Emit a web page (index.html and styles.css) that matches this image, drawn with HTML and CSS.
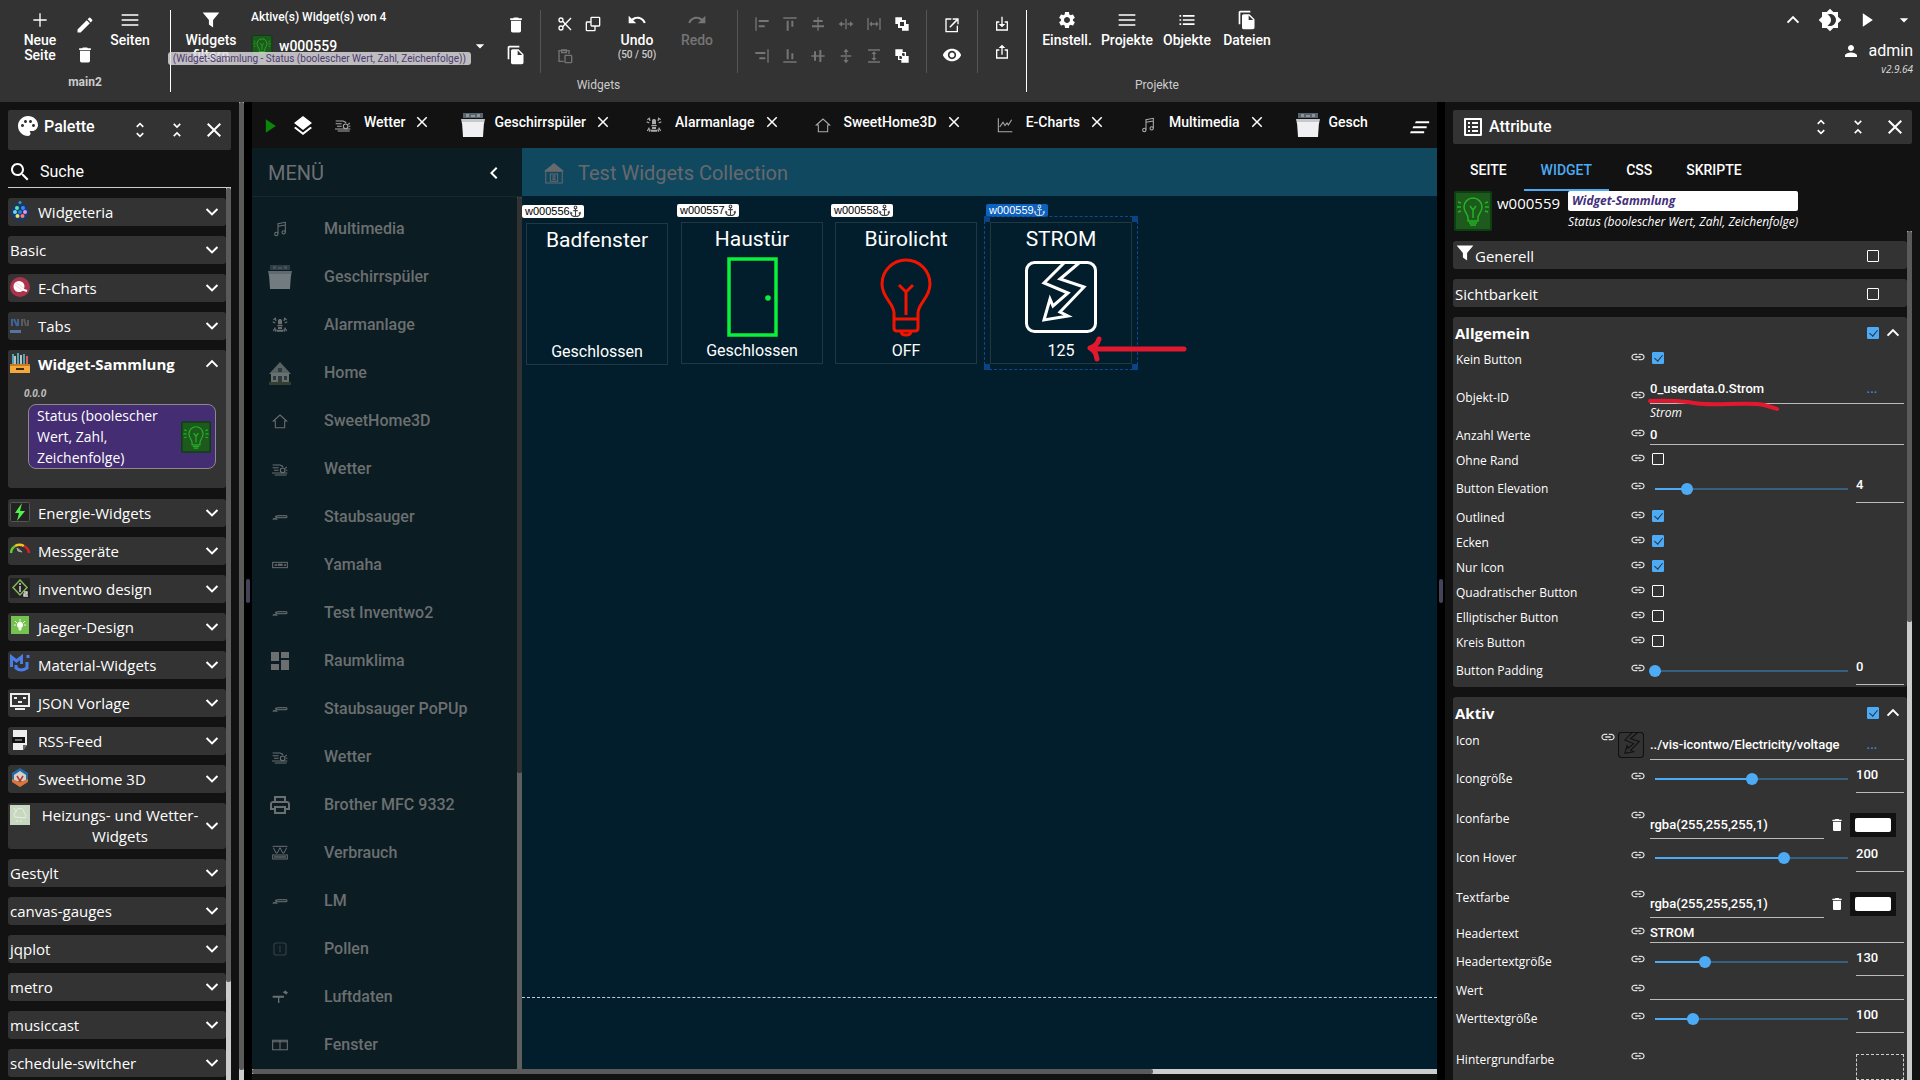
FILE: index.html
```html
<!DOCTYPE html>
<html lang="de">
<head>
<meta charset="utf-8">
<title>main2</title>
<link rel="stylesheet" href="styles.css">
</head>
<body>
<svg class="sprite" aria-hidden="true">
  <symbol id="add" viewBox="0 0 24 24"><path d="M20 12.800h-7.200V20h-1.600v-7.200H4v-1.600h7.200V4h1.600v7.200H20z"/></symbol>
  <symbol id="edit" viewBox="0 0 24 24"><path d="M3 17.250V21h3.750L17.810 9.940l-3.750-3.750L3 17.250zM20.710 7.040c.39-.39.39-1.020 0-1.410l-2.340-2.340a1 1 0 0 0-1.410 0l-1.830 1.830 3.750 3.750 1.830-1.830z"/></symbol>
  <symbol id="trash" viewBox="0 0 24 24"><path d="M6 19c0 1.100.9 2 2 2h8c1.100 0 2-.9 2-2V7H6v12zM19 4h-3.500l-1-1h-5l-1 1H5v2h14V4z"/></symbol>
  <symbol id="lines" viewBox="0 0 24 24"><path d="M2 19h20v-2H2zM2 13h20v-2H2zM2 7h20V5H2z"/></symbol>
  <symbol id="filter" viewBox="0 0 24 24"><path d="M2 3h20l-7.500 9v9l-5-3.500V12z"/></symbol>
  <symbol id="close" viewBox="0 0 24 24"><path d="M19 6.410L17.590 5 12 10.590 6.410 5 5 6.410 10.590 12 5 17.590 6.410 19 12 13.410 17.590 19 19 17.590 13.410 12z"/></symbol>
  <symbol id="unfold" viewBox="0 0 24 24"><path d="M12 5.830 15.170 9l1.410-1.410L12 3 7.410 7.590 8.830 9 12 5.830zm0 12.340L8.830 15l-1.410 1.410L12 21l4.590-4.590L15.170 15 12 18.170z"/></symbol>
  <symbol id="fold" viewBox="0 0 24 24"><path d="M7.410 18.590 8.830 20 12 16.830 15.170 20l1.410-1.410L12 14l-4.590 4.590zm9.180-13.180L15.170 4 12 7.170 8.830 4 7.410 5.410 12 10l4.590-4.590z"/></symbol>
  <symbol id="down" viewBox="0 0 24 24"><path d="M17.700 7.500 12 13.170 6.300 7.500 4.600 9.200l7.400 7.400 7.400-7.400z"/></symbol>
  <symbol id="up" viewBox="0 0 24 24"><path d="M17.700 16 12 10.330 6.300 16l-1.700-1.700L12 6.900l7.400 7.400z"/></symbol>
  <symbol id="left" viewBox="0 0 24 24"><path d="M15.410 7.410 14 6l-6 6 6 6 1.410-1.410L10.830 12z"/></symbol>
  <symbol id="undo" viewBox="0 0 24 24"><path d="M12.500 8c-2.650 0-5.050.99-6.900 2.600L2 7v9h9l-3.620-3.620c1.390-1.160 3.160-1.880 5.120-1.880 3.540 0 6.550 2.310 7.600 5.500l2.370-.78C21.080 11.030 17.150 8 12.500 8z"/></symbol>
  <symbol id="redo" viewBox="0 0 24 24"><path d="M18.400 10.600C16.550 8.990 14.150 8 11.500 8c-4.650 0-8.580 3.030-9.960 7.220L3.900 16c1.050-3.190 4.050-5.500 7.600-5.500 1.950 0 3.730.72 5.120 1.880L13 16h9V7l-3.600 3.600z"/></symbol>
  <symbol id="files" viewBox="0 0 24 24"><path d="M16 1H4c-1.100 0-2 .9-2 2v14h2V3h12V1zm-1 4 6 6v10c0 1.100-.9 2-2 2H8c-1.100 0-2-.9-2-2V7c0-1.100.9-2 2-2h7zm-1 7h5.500L14 6.500V12z"/></symbol>
  <symbol id="cut" viewBox="0 0 24 24"><g fill="none" stroke="currentColor" stroke-width="2"><circle cx="6" cy="6" r="3"/><circle cx="6" cy="18" r="3"/><path d="M8.500 8 21 21M8.500 16 21 3"/></g></symbol>
  <symbol id="copy" viewBox="0 0 24 24"><g fill="none" stroke="currentColor" stroke-width="2"><rect x="9" y="2" width="13" height="13" rx="1"/><path d="M9 9H3a1 1 0 0 0-1 1v11a1 1 0 0 0 1 1h11a1 1 0 0 0 1-1v-6"/></g></symbol>
  <symbol id="paste" viewBox="0 0 24 24"><g fill="none" stroke="currentColor" stroke-width="2"><path d="M10 20H3V4h15v5M7 3h7v4H7z"/><rect x="12" y="11" width="10" height="11" rx="1"/></g></symbol>
  <symbol id="al" viewBox="0 0 24 24"><path d="M2 2h2v20H2zM7 6h15v3H7zM7 14h9v3H7z"/></symbol>
  <symbol id="ar" viewBox="0 0 24 24"><path d="M20 2h2v20h-2zM2 6h15v3H2zM8 14h9v3H8z"/></symbol>
  <symbol id="at" viewBox="0 0 24 24"><path d="M2 2h20v2H2zM7 7h3v15H7zM14 7h3v9h-3z"/></symbol>
  <symbol id="ab" viewBox="0 0 24 24"><path d="M2 20h20v2H2zM7 2h3v15H7zM14 8h3v9h-3z"/></symbol>
  <symbol id="ac" viewBox="0 0 24 24"><path d="M11 2h2v4h6v3h-6v5h8v3h-8v5h-2v-5H3v-3h8V9H5V6h6z"/></symbol>
  <symbol id="am" viewBox="0 0 24 24"><path d="M2 11h4V5h3v6h5V3h3v8h5v2h-5v8h-3v-8H9v6H6v-6H2z"/></symbol>
  <symbol id="wh" viewBox="0 0 24 24"><path d="M11 4h2v16h-2zM1 12l5-4v3h4v2H6v3zM23 12l-5-4v3h-4v2h4v3z"/></symbol>
  <symbol id="wv" viewBox="0 0 24 24"><path d="M4 11h16v2H4zM12 1l4 5h-3v4h-2V6H8zM12 23l4-5h-3v-4h-2v4H8z"/></symbol>
  <symbol id="sh" viewBox="0 0 24 24"><path d="M2 3h2v18H2zM20 3h2v18h-2zM5 12l4-4v3h6V8l4 4-4 4v-3H9v3z"/></symbol>
  <symbol id="sv" viewBox="0 0 24 24"><path d="M3 2h18v2H3zM3 20h18v2H3zM12 5l4 4h-3v6h3l-4 4-4-4h3V9H8z"/></symbol>
  <symbol id="front" viewBox="0 0 24 24"><path d="M2 2h10v10H2zM12 12h10v10H12z"/><path d="M7.500 7.500h9v9h-9z" fill="#333" stroke="currentColor" stroke-width="3"/></symbol>
  <symbol id="back" viewBox="0 0 24 24"><path d="M7 7h10v10H7z" fill="#333" stroke="currentColor" stroke-width="2"/><path d="M2 2h11v10H2zM11 12h11v10H11z"/><path d="M12 8h3v3h-3zM9 13h3v3H9z" fill="#333"/></symbol>
  <symbol id="open" viewBox="0 0 24 24"><path d="M19 21H4V4h7V2H3a1 1 0 0 0-1 1v19a1 1 0 0 0 1 1h17a1 1 0 0 0 1-1v-9h-2zM13 2v2h5L8 14.500 9.500 16 20 5.500V11h2V2z"/></symbol>
  <symbol id="eye" viewBox="0 0 24 24"><path d="M12 4.500C7 4.500 2.730 7.610 1 12c1.730 4.390 6 7.500 11 7.500s9.270-3.110 11-7.500c-1.730-4.390-6-7.500-11-7.500zM12 17c-2.760 0-5-2.240-5-5s2.240-5 5-5 5 2.240 5 5-2.240 5-5 5zm0-8c-1.660 0-3 1.340-3 3s1.340 3 3 3 3-1.340 3-3-1.340-3-3-3z"/></symbol>
  <symbol id="import" viewBox="0 0 24 24"><path d="M8 8H3v14h18V8h-5v2h3v10H5V10h3zM11 1h2v11h4l-5 5-5-5h4z"/></symbol>
  <symbol id="export" viewBox="0 0 24 24"><path d="M8 8H3v14h18V8h-5v2h3v10H5V10h3zM11 16h2V6h4l-5-5-5 5h4z"/></symbol>
  <symbol id="gear" viewBox="0 0 24 24"><path d="M19.140 12.940c.04-.3.06-.61.060-.94s-.02-.64-.07-.94l2.030-1.580c.18-.14.230-.41.120-.61l-1.920-3.320c-.12-.22-.37-.29-.59-.22l-2.390.96c-.5-.38-1.030-.7-1.620-.94l-.36-2.540c-.04-.24-.24-.41-.48-.41h-3.840c-.24 0-.43.170-.47.410l-.36 2.540c-.59.240-1.130.57-1.620.94l-2.390-.96c-.22-.08-.47 0-.59.220L2.740 8.870c-.12.210-.08.470.120.610l2.030 1.580c-.05.3-.09.630-.09.940s.02.640.070.940l-2.030 1.580c-.18.140-.23.410-.12.610l1.920 3.320c.12.220.37.290.59.220l2.390-.96c.5.380 1.030.7 1.620.94l.36 2.540c.05.240.24.410.48.410h3.840c.24 0 .44-.17.470-.41l.36-2.540c.59-.24 1.130-.56 1.620-.94l2.390.96c.22.080.47 0 .59-.22l1.920-3.320c.12-.22.070-.47-.12-.61l-2.010-1.580zM12 15.600c-1.980 0-3.600-1.620-3.600-3.600s1.620-3.600 3.600-3.600 3.600 1.620 3.600 3.600-1.620 3.600-3.600 3.600z"/></symbol>
  <symbol id="list" viewBox="0 0 24 24"><path d="M3 13h2v-2H3v2zm0 5h2v-2H3v2zm0-10h2V6H3v2zm4 5h14v-2H7v2zm0 5h14v-2H7v2zM7 6v2h14V6H7z"/></symbol>
  <symbol id="bright" viewBox="0 0 24 24"><path d="M20 8.690V4h-4.690L12 .69 8.690 4H4v4.690L.69 12 4 15.310V20h4.690L12 23.310 15.310 20H20v-4.690L23.310 12 20 8.690zM12 18c-.89 0-1.740-.2-2.500-.55C11.560 16.500 13 14.420 13 12s-1.440-4.500-3.500-5.450C10.260 6.200 11.110 6 12 6c3.310 0 6 2.690 6 6s-2.690 6-6 6z"/></symbol>
  <symbol id="play" viewBox="0 0 24 24"><path d="M7 4v16l12-8z"/></symbol>
  <symbol id="drop" viewBox="0 0 24 24"><path d="m7 10 5 5 5-5z"/></symbol>
  <symbol id="person" viewBox="0 0 24 24"><path d="M12 12c2.210 0 4-1.790 4-4s-1.790-4-4-4-4 1.790-4 4 1.790 4 4 4zm0 2c-2.670 0-8 1.340-8 4v2h16v-2c0-2.660-5.330-4-8-4z"/></symbol>
  <symbol id="link" viewBox="0 0 24 24"><path d="M3.900 12c0-1.710 1.390-3.100 3.100-3.100h4V7H7c-2.760 0-5 2.240-5 5s2.240 5 5 5h4v-1.900H7c-1.710 0-3.100-1.390-3.100-3.100zM8 13h8v-2H8v2zm9-6h-4v1.900h4c1.710 0 3.100 1.390 3.100 3.100s-1.390 3.100-3.100 3.100h-4V17h4c2.760 0 5-2.240 5-5s-2.240-5-5-5z"/></symbol>
  <symbol id="layers" viewBox="0 0 24 24"><path d="m11.990 18.540-7.370-5.730L3 14.070l9 7 9-7-1.630-1.270-7.380 5.740zM12 16l7.360-5.730L21 9l-9-7-9 7 1.630 1.270L12 16z"/></symbol>
  <symbol id="palette" viewBox="0 0 24 24"><path d="M12 2C6.490 2 2 6.490 2 12s4.490 10 10 10c1.380 0 2.500-1.120 2.500-2.500 0-.61-.23-1.200-.64-1.670-.08-.1-.13-.21-.13-.33 0-.28.220-.5.500-.5H16c3.310 0 6-2.690 6-6 0-4.960-4.490-9-10-9zm-5.500 11c-.83 0-1.500-.67-1.500-1.500S5.670 10 6.500 10s1.500.67 1.500 1.500S7.330 13 6.500 13zm3-4C8.670 9 8 8.330 8 7.500S8.670 6 9.500 6s1.500.67 1.500 1.500S10.330 9 9.500 9zm5 0c-.83 0-1.500-.67-1.500-1.500S13.670 6 14.500 6s1.500.67 1.500 1.500S15.330 9 14.500 9zm3 4c-.83 0-1.500-.67-1.500-1.500s.67-1.500 1.500-1.500 1.500.67 1.500 1.500-.67 1.500-1.500 1.500z"/></symbol>
  <symbol id="search" viewBox="0 0 24 24"><path d="M15.500 14h-.79l-.28-.27C15.410 12.590 16 11.110 16 9.500 16 5.910 13.090 3 9.500 3S3 5.910 3 9.500 5.910 16 9.500 16c1.610 0 3.090-.59 4.230-1.570l.27.280v.79l5 4.990L20.490 19l-4.990-5zm-6 0C7.010 14 5 11.990 5 9.500S7.010 5 9.500 5 14 7.010 14 9.500 11.990 14 9.500 14z"/></symbol>
  <symbol id="listalt" viewBox="0 0 24 24"><path d="M19 5v14H5V5h14m1.100-2H3.900c-.5 0-.9.4-.9.9v16.200c0 .4.4.9.9.9h16.200c.4 0 .9-.5.9-.9V3.900c0-.5-.5-.9-.9-.9zM11 7h6v2h-6V7zm0 4h6v2h-6v-2zm0 4h6v2h-6zM7 7h2v2H7zm0 4h2v2H7zm0 4h2v2H7z"/></symbol>
  <symbol id="printer" viewBox="0 0 24 24"><path d="M19 8h-1V3H6v5H5c-1.660 0-3 1.340-3 3v6h4v4h12v-4h4v-6c0-1.660-1.340-3-3-3zM8 5h8v3H8V5zm8 12v2H8v-4h8v2zm2-2v-2H6v2H4v-4c0-.55.450-1 1-1h14c.55 0 1 .45 1 1v4h-2z"/></symbol>
  <symbol id="dash" viewBox="0 0 24 24"><path d="M3 3h8v9H3zM3 15h8v6H3zM13 3h8v6h-8zM13 11h8v10h-8z"/></symbol>
  <symbol id="burger" viewBox="0 0 24 24"><path d="M7 5h16v2.500H6zM4 11h16v2.500H3zM1 17h16v2.500H0z"/></symbol>
  <symbol id="anchor" viewBox="0 0 12 14"><g fill="none" stroke="currentColor" stroke-width="1.200"><circle cx="6" cy="2.500" r="1.500"/><path d="M6 4v8.500M3.500 6h5M1 8c0 3 2 4.500 5 4.500S11 11 11 8M.5 9.500 1 8l1.500 1M11.500 9.500 11 8 9.500 9"/></g></symbol>
  <symbol id="note" viewBox="0 0 24 24"><g fill="none" stroke="currentColor" stroke-width="1.600"><path d="M9 19V4l11-2v15M9 8l11-2"/><circle cx="6.500" cy="19.500" r="2.500"/><circle cx="17.500" cy="17" r="2.500"/></g></symbol>
  <symbol id="dish" viewBox="0 0 24 24"><path d="M2 0h20v5H2z" fill="#59636c"/><path d="M5 1h3v3H5zM10 2h4v2h-4zM16 1h3v3h-3z" fill="#8d959c"/><path d="M0 6h24l-1 5H1z" fill="#c5c8cc"/><path d="M1 9h22l-1 15H2z" fill="#f0f0f2"/></symbol>
  <symbol id="alarm" viewBox="0 0 24 24"><path d="M9 6c0-4 6-4 6 0v5H9zM8 12h8v2H8zM9 15h6v3H9zM7 19h10v3H7z"/><g fill="none" stroke="currentColor" stroke-width="1.800"><path d="M2 4l3-2 1 4M1 7l4 2M22 4l-3-2-1 4M23 7l-4 2M2 21l3-5M5 22l1-4M22 21l-3-5M19 22l-1-4"/></g></symbol>
  <symbol id="cottage" viewBox="0 0 24 24"><path d="M12 1 1 13h22z" fill="#b8b8b2"/><path d="M3 12h18v10H3z" fill="#d8d8d2"/><path d="M10 15h4v7h-4zM5 15h3v4H5zM16 15h3v4h-3zM10 7h4v4h-4z" fill="#59605c"/><path d="M1 21h22v3H1z" fill="#66663c"/></symbol>
  <symbol id="house" viewBox="0 0 24 24"><path d="M2 12 12 3l10 9h-3v10H5V12z" fill="none" stroke="currentColor" stroke-width="1.600"/></symbol>
  <symbol id="weather" viewBox="0 0 24 24"><g fill="none" stroke="currentColor" stroke-width="1.600"><circle cx="16" cy="14" r="3.500"/><path d="M1 6h11l4 2M1 10h9M3 14h7M0 18h23M4 21h18M16 7V9M22 9l-2 2M23 14h-2"/></g></symbol>
  <symbol id="vacuum" viewBox="0 0 24 24"><path d="M4 11c3-3 8-2 17-2 3 0 3 5 0 5H6zM1 14l5-1 3 3H1z" opacity=".85"/><path d="M8 11h13v1H8z" fill="#0b1c23"/></symbol>
  <symbol id="amp" viewBox="0 0 24 24"><rect x="1" y="8" width="22" height="8" fill="none" stroke="currentColor" stroke-width="1.500"/><path d="M4 11h4v2H4zM9 10h7v3H9zM18 11h3v2h-3z"/></symbol>
  <symbol id="graph" viewBox="0 0 24 24"><g fill="none" stroke="currentColor" stroke-width="1.500"><path d="M1 2h22M2 4l4 8h2l4-8 4 8h2l4-8"/><rect x="1" y="15" width="22" height="6"/></g><path d="M3 17h18v2H3z"/></symbol>
  <symbol id="pollen" viewBox="0 0 24 24"><g fill="none" stroke="currentColor" stroke-width="1.600"><rect x="3" y="3" width="18" height="18" rx="3"/><path d="M12 7v10"/></g></symbol>
  <symbol id="sensor" viewBox="0 0 24 24"><path d="M1 10h17v3h-7v8H9v-8H1zM16 5l5-3v6zM20 3l4 2-3 4z"/></symbol>
  <symbol id="window" viewBox="0 0 24 24"><path d="M1 5h22v14H1zM12 5v14M1 7h22" fill="none" stroke="currentColor" stroke-width="1.600"/></symbol>
  <symbol id="chart" viewBox="0 0 24 24"><path d="M2 2v20h21M4 15l5-7 3 5 3-4 2 3 5-8" fill="none" stroke="currentColor" stroke-width="1.600"/></symbol>
  <symbol id="homeapp" viewBox="0 0 24 24"><path d="M12 1 1 10h22z"/><path d="M3 10h18v13H3zM8 13h8v8H8zM11 15h2v4h-2z" fill="none" stroke="currentColor" stroke-width="1.100"/></symbol>
  <symbol id="bulbtile" viewBox="0 0 38 40"><rect x="1" y="1" width="36" height="38" rx="1" fill="#1e5a1e" stroke="#0d4010" stroke-width="2"/><g fill="none" stroke="#22b422" stroke-width="1.500"><path d="M14 27c0-4-4-6-4-11a9 9 0 0 1 18 0c0 5-4 7-4 11v3H14zM15 32h8M16 34h6M16 15l3 4 3-4M19 19v8M4 11l3 1M3 16h4M4 21l3-1M34 11l-3 1M35 16h-4M34 21l-3-1"/></g></symbol>
  <symbol id="voltage" viewBox="0 0 72 72"><g fill="none" stroke="currentColor" stroke-width="3"><rect x="1.500" y="1.500" width="69" height="69" rx="8"/><path d="M39 2 19 22l24 10L28 45l-3-7-6 21 24-4-8-4 24-25-24-8L54 2" stroke-linejoin="miter"/></g></symbol>
</svg>

<header class="ribbon">
  <section class="group pages">
    <div class="tools">
      <button class="tool narrow"><svg class="i20"><use href="#add"/></svg>Neue Seite</button>
      <div class="stack loose mid">
        <button aria-label="Bearbeiten"><svg class="i20"><use href="#edit"/></svg></button>
        <button aria-label="Löschen"><svg class="i20"><use href="#trash"/></svg></button>
      </div>
      <button class="tool narrow"><svg class="i20"><use href="#lines"/></svg>Seiten</button>
    </div>
    <div class="group-name strong">main2</div>
  </section>
  <section class="group widgets">
    <div class="tools">
      <button class="tool"><svg class="i20"><use href="#filter"/></svg>Widgets filtern</button>
      <div class="picker">
        <div class="picker-title">Aktive(s) Widget(s) von 4</div>
        <button class="picker-value"><svg class="pic-bulb"><use href="#bulbtile"/></svg><span>w000559</span><svg class="i20"><use href="#drop"/></svg></button>
        <div class="tooltip">(Widget-Sammlung - Status (boolescher Wert, Zahl, Zeichenfolge))</div>
      </div>
      <div class="stack loose">
        <button aria-label="Widget löschen"><svg class="i20"><use href="#trash"/></svg></button>
        <button aria-label="Widget klonen"><svg class="i20"><use href="#files"/></svg></button>
      </div>
      <i class="sep"></i>
      <div class="icon-grid two">
        <button aria-label="Ausschneiden"><svg class="i16"><use href="#cut"/></svg></button>
        <button aria-label="Kopieren"><svg class="i16"><use href="#copy"/></svg></button>
        <button class="off" aria-label="Einfügen"><svg class="i16"><use href="#paste"/></svg></button>
      </div>
      <button class="tool"><svg class="i20"><use href="#undo"/></svg>Undo<small>(50 / 50)</small></button>
      <button class="tool off"><svg class="i20"><use href="#redo"/></svg>Redo</button>
      <i class="sep"></i>
      <div class="icon-grid six">
        <button class="off" aria-label="Links"><svg class="i16"><use href="#al"/></svg></button>
        <button class="off" aria-label="Oben"><svg class="i16"><use href="#at"/></svg></button>
        <button class="off" aria-label="Mitte horizontal"><svg class="i16"><use href="#ac"/></svg></button>
        <button class="off" aria-label="Breite"><svg class="i16"><use href="#wh"/></svg></button>
        <button class="off" aria-label="Abstand horizontal"><svg class="i16"><use href="#sh"/></svg></button>
        <button aria-label="Nach vorne"><svg class="i16"><use href="#front"/></svg></button>
        <button class="off" aria-label="Rechts"><svg class="i16"><use href="#ar"/></svg></button>
        <button class="off" aria-label="Unten"><svg class="i16"><use href="#ab"/></svg></button>
        <button class="off" aria-label="Mitte vertikal"><svg class="i16"><use href="#am"/></svg></button>
        <button class="off" aria-label="Höhe"><svg class="i16"><use href="#wv"/></svg></button>
        <button class="off" aria-label="Abstand vertikal"><svg class="i16"><use href="#sv"/></svg></button>
        <button aria-label="Nach hinten"><svg class="i16"><use href="#back"/></svg></button>
      </div>
      <i class="sep"></i>
      <div class="stack loose wide">
        <button aria-label="Öffnen"><svg class="i16"><use href="#open"/></svg></button>
        <button aria-label="Anzeigen"><svg class="i20"><use href="#eye"/></svg></button>
      </div>
      <i class="sep"></i>
      <div class="stack">
        <button aria-label="Importieren"><svg class="i16"><use href="#import"/></svg></button>
        <button aria-label="Exportieren"><svg class="i16"><use href="#export"/></svg></button>
      </div>
    </div>
    <div class="group-name">Widgets</div>
  </section>
  <section class="group projects">
    <div class="tools">
      <button class="tool"><svg class="i20"><use href="#gear"/></svg>Einstell.</button>
      <button class="tool"><svg class="i20"><use href="#lines"/></svg>Projekte</button>
      <button class="tool"><svg class="i20"><use href="#list"/></svg>Objekte</button>
      <button class="tool"><svg class="i20"><use href="#files"/></svg>Dateien</button>
    </div>
    <div class="group-name">Projekte</div>
  </section>
  <section class="account">
    <div class="account-icons">
      <button aria-label="Einklappen"><svg class="i20"><use href="#up"/></svg></button>
      <button aria-label="Thema"><svg class="i24"><use href="#bright"/></svg></button>
      <button aria-label="Start"><svg class="i20"><use href="#play"/></svg></button>
      <button aria-label="Mehr"><svg class="i20"><use href="#drop"/></svg></button>
    </div>
    <div class="user"><svg class="i18"><use href="#person"/></svg>admin</div>
    <div class="version">v2.9.64</div>
  </section>
</header>

<main class="work">
  <aside class="palette">
    <div class="panel-head tall"><svg class="i24"><use href="#palette"/></svg><h2>Palette</h2>
      <button aria-label="Alle öffnen"><svg class="i20"><use href="#unfold"/></svg></button>
      <button aria-label="Alle schließen"><svg class="i20"><use href="#fold"/></svg></button>
      <button aria-label="Schließen"><svg class="i24"><use href="#close"/></svg></button>
    </div>
    <label class="search"><svg class="i24"><use href="#search"/></svg><input type="text" placeholder="Suche" aria-label="Suche"></label>
    <div class="sets-wrap">
      <div class="sets">
        <button class="set"><svg class="pic" viewBox="0 0 20 20"><circle cx="10" cy="11" r="9" fill="#173a6a"/><circle cx="10" cy="1.500" r="1.500" fill="#3a9bd0"/><circle cx="7" cy="7" r="2" fill="#5be8a0"/><circle cx="13" cy="7" r="2" fill="#2f8dff"/><circle cx="5" cy="11" r="2" fill="#6ad3ff"/><circle cx="10" cy="11" r="2" fill="#1e7fe0"/><circle cx="15" cy="11" r="2" fill="#e88ff0"/><circle cx="7.500" cy="15" r="2" fill="#e9e36a"/><circle cx="12.500" cy="15" r="2" fill="#ff7a6a"/></svg><span>Widgeteria</span><svg class="i20"><use href="#down"/></svg></button>
        <button class="set"><span>Basic</span><svg class="i20"><use href="#down"/></svg></button>
        <button class="set"><svg class="pic" viewBox="0 0 20 20"><circle cx="10" cy="10" r="10" fill="#aa344d"/><circle cx="9" cy="9.500" r="5.500" fill="#fff"/><path d="M11 12l6 2" stroke="#fff" stroke-width="2"/><path d="M5 8l7 5M6 6l8 5" stroke="#e9b7c1" stroke-width=".6"/></svg><span>E-Charts</span><svg class="i20"><use href="#down"/></svg></button>
        <button class="set"><svg class="pic" viewBox="0 0 20 20"><path d="M2 4v7M4 4l3 7M8 4v7" stroke="#3f6396" stroke-width="2"/><path d="M12 4v7M14 4l2 7M18 5v6" stroke="#5a5a5a" stroke-width="2"/><path d="M0 15h11v3H0z" fill="#54759f"/></svg><span>Tabs</span><svg class="i20"><use href="#down"/></svg></button>
        <div class="open-set">
          <button class="set"><svg class="pic" viewBox="0 0 20 20"><path d="M3 1v12M8 0v13M14 1v12" stroke="#49a7b8" stroke-width="2"/><path d="M5 3v10M11 2v11" stroke="#eee" stroke-width="1.500"/><path d="M17 3v10" stroke="#d95c5c" stroke-width="2"/><path d="M0 11h20v9H0z" fill="#f6a73b"/><path d="M0 11h20v2H0z" fill="#c77c1f"/><path d="M6 15h8v2H6z" fill="#3c2a12"/></svg><span>Widget-Sammlung</span><svg class="i20"><use href="#up"/></svg></button>
          <div class="set-version">0.0.0</div>
          <button class="template"><span>Status (boolescher Wert, Zahl, Zeichenfolge)</span><svg class="pic-tile"><use href="#bulbtile"/></svg></button>
        </div>
        <button class="set"><svg class="pic" viewBox="0 0 20 20"><rect x=".5" y=".5" width="19" height="19" rx="1" fill="#222" stroke="#555"/><path d="M12 1 5 11h4l-2 8 8-10h-5z" fill="#54f04a"/></svg><span>Energie-Widgets</span><svg class="i20"><use href="#down"/></svg></button>
        <button class="set"><svg class="pic" viewBox="0 0 20 20"><g fill="none" stroke-width="2.500"><path d="M1 13a9 9 0 0 1 4-7" stroke="#5ecb2e"/><path d="M5 6a9 9 0 0 1 9 0" stroke="#f3c322"/><path d="M14 6a9 9 0 0 1 5 7" stroke="#d22"/></g><path d="M7 8l5 4-4-1z" stroke="#aaa" fill="#aaa"/></svg><span>Messgeräte</span><svg class="i20"><use href="#down"/></svg></button>
        <button class="set"><svg class="pic" viewBox="0 0 20 20"><path d="M0 0h20v20H0z" fill="#222"/><path d="M10 2l7 7.500-7 7.500-7-7.500z" fill="none" stroke="#85b85a" stroke-width="1.500"/><path d="M10 5v2M10 8v6M14 14h3v2h-3v2h4" stroke="#ddd" stroke-width="1.400" fill="none"/></svg><span>inventwo design</span><svg class="i20"><use href="#down"/></svg></button>
        <button class="set"><svg class="pic" viewBox="0 0 20 20"><path d="M1 0h18v18H1z" fill="#76c24e"/><circle cx="10" cy="9" r="3" fill="#fff"/><path d="M10 3v3M4 9h2M14 9h2M5 5l2 2M15 5l-2 2M9 12h2v2H9z" stroke="#e6f7da"/></svg><span>Jaeger-Design</span><svg class="i20"><use href="#down"/></svg></button>
        <button class="set"><svg class="pic" viewBox="0 0 20 20"><path d="M1.500 13V3l5 4 5-4v7M6 11v3q5 4 11 0V8M18 1v3" fill="none" stroke="#4b7de8" stroke-width="3"/></svg><span>Material-Widgets</span><svg class="i20"><use href="#down"/></svg></button>
        <button class="set"><svg class="pic" viewBox="0 0 20 20"><rect x="1" y="2" width="18" height="12" fill="none" stroke="#eee" stroke-width="2"/><path d="M4 6h3M13 6h3M8 10h4M5 17h10" stroke="#eee" stroke-width="2"/></svg><span>JSON Vorlage</span><svg class="i20"><use href="#down"/></svg></button>
        <button class="set"><svg class="pic" viewBox="0 0 20 20"><path d="M3 0h14v15l-4 5H3z" fill="#eee"/><path d="M2 7h13v6H2z" fill="#111"/><path d="M5 10h7" stroke="#ccc"/><path d="M13 20v-5h4z" fill="#666"/></svg><span>RSS-Feed</span><svg class="i20"><use href="#down"/></svg></button>
        <button class="set"><svg class="pic" viewBox="0 0 20 20"><path d="M10 0l8 5v8l-8 6-8-6V5z" fill="#236aa6"/><path d="M4 7l6-4 6 4v6H4z" fill="#d6cfc6"/><path d="M2 11l8 3 8-3v3l-8 5-8-5z" fill="#d9763a"/><path d="M7 8l3 5 3-5" stroke="#b33" fill="none" stroke-width="1.500"/></svg><span>SweetHome 3D</span><svg class="i20"><use href="#down"/></svg></button>
        <button class="set double"><svg class="pic" viewBox="0 0 20 20"><path d="M0 0h20v20H0z" fill="#c8d8c0"/><path d="M5 12a3 3 0 0 1 1-5 4 4 0 0 1 8 1 3 3 0 0 1 1 5zM7 15v2M11 15v2M4 3l2 3" fill="none" stroke="#e8f0e4"/></svg><span>Heizungs- und Wetter-Widgets</span><svg class="i20"><use href="#down"/></svg></button>
        <button class="set"><span>Gestylt</span><svg class="i20"><use href="#down"/></svg></button>
        <button class="set"><span>canvas-gauges</span><svg class="i20"><use href="#down"/></svg></button>
        <button class="set"><span>jqplot</span><svg class="i20"><use href="#down"/></svg></button>
        <button class="set"><span>metro</span><svg class="i20"><use href="#down"/></svg></button>
        <button class="set"><span>musiccast</span><svg class="i20"><use href="#down"/></svg></button>
        <button class="set"><span>schedule-switcher</span><svg class="i20"><use href="#down"/></svg></button>
      </div>
      <div class="bar"><i style="height:89%"></i></div>
    </div>
  </aside>
  <div class="bar"><i style="height:99%"></i></div>
  <div class="gutter"><i></i></div>

  <section class="editor">
    <nav class="tabs">
      <button class="run" aria-label="Start"><svg class="i20"><use href="#play"/></svg></button>
      <button class="layers" aria-label="Ebenen"><svg class="i24"><use href="#layers"/></svg></button>
      <div class="tab-strip">
        <div class="tab"><svg class="i16"><use href="#weather"/></svg><span>Wetter</span><button aria-label="Schließen"><svg class="i18"><use href="#close"/></svg></button></div>
        <div class="tab"><svg class="i24"><use href="#dish"/></svg><span>Geschirrspüler</span><button aria-label="Schließen"><svg class="i18"><use href="#close"/></svg></button></div>
        <div class="tab"><svg class="i16"><use href="#alarm"/></svg><span>Alarmanlage</span><button aria-label="Schließen"><svg class="i18"><use href="#close"/></svg></button></div>
        <div class="tab"><svg class="i16"><use href="#house"/></svg><span>SweetHome3D</span><button aria-label="Schließen"><svg class="i18"><use href="#close"/></svg></button></div>
        <div class="tab"><svg class="i16"><use href="#chart"/></svg><span>E-Charts</span><button aria-label="Schließen"><svg class="i18"><use href="#close"/></svg></button></div>
        <div class="tab"><svg class="i16"><use href="#note"/></svg><span>Multimedia</span><button aria-label="Schließen"><svg class="i18"><use href="#close"/></svg></button></div>
        <div class="tab"><svg class="i24"><use href="#dish"/></svg><span>Gesch</span></div>
      </div>
      <button class="more" aria-label="Seitenliste"><svg class="i20"><use href="#burger"/></svg></button>
    </nav>
    <div class="stage">
      <nav class="menu">
        <div class="menu-head"><h1>MENÜ</h1><button aria-label="Einklappen"><svg class="i24"><use href="#left"/></svg></button></div>
        <div class="menu-body">
          <ul>
            <li><a href="#"><svg class="i16"><use href="#note"/></svg>Multimedia</a></li>
            <li><a href="#"><svg class="i24 dim"><use href="#dish"/></svg>Geschirrspüler</a></li>
            <li><a href="#"><svg class="i16"><use href="#alarm"/></svg>Alarmanlage</a></li>
            <li><a href="#"><svg class="i24 dim"><use href="#cottage"/></svg>Home</a></li>
            <li><a href="#"><svg class="i16"><use href="#house"/></svg>SweetHome3D</a></li>
            <li><a href="#"><svg class="i16"><use href="#weather"/></svg>Wetter</a></li>
            <li><a href="#"><svg class="i16"><use href="#vacuum"/></svg>Staubsauger</a></li>
            <li><a href="#"><svg class="i16"><use href="#amp"/></svg>Yamaha</a></li>
            <li><a href="#"><svg class="i16"><use href="#vacuum"/></svg>Test Inventwo2</a></li>
            <li><a href="#"><svg class="i24"><use href="#dash"/></svg>Raumklima</a></li>
            <li><a href="#"><svg class="i16"><use href="#vacuum"/></svg>Staubsauger PoPUp</a></li>
            <li><a href="#"><svg class="i16"><use href="#weather"/></svg>Wetter</a></li>
            <li><a href="#"><svg class="i24"><use href="#printer"/></svg>Brother MFC 9332</a></li>
            <li><a href="#"><svg class="i16"><use href="#graph"/></svg>Verbrauch</a></li>
            <li><a href="#"><svg class="i16"><use href="#vacuum"/></svg>LM</a></li>
            <li><a href="#"><svg class="i16 dim"><use href="#pollen"/></svg>Pollen</a></li>
            <li><a href="#"><svg class="i16"><use href="#sensor"/></svg>Luftdaten</a></li>
            <li><a href="#"><svg class="i16"><use href="#window"/></svg>Fenster</a></li>
          </ul>
          <div class="bar dark"><i style="height:66%"></i></div>
        </div>
      </nav>
      <div class="view">
        <div class="view-head"><svg class="i22"><use href="#homeapp"/></svg><h1>Test Widgets Collection</h1></div>
        <div class="canvas">
          <div class="widget w1"><div class="badge">w000556<svg><use href="#anchor"/></svg></div><h3>Badfenster</h3><p>Geschlossen</p></div>
          <div class="widget w2"><div class="badge">w000557<svg><use href="#anchor"/></svg></div><h3>Haustür</h3>
            <svg class="art" viewBox="0 0 80 80"><rect x="17" y="2" width="47" height="76" fill="none" stroke="#0bf03b" stroke-width="3.500"/><circle cx="56" cy="41" r="2.800" fill="#0bf03b"/></svg><p>Geschlossen</p></div>
          <div class="widget w3"><div class="badge">w000558<svg><use href="#anchor"/></svg></div><h3>Bürolicht</h3>
            <svg class="art" viewBox="0 0 80 80"><g fill="none" stroke="#f31400" stroke-width="3"><path d="M28 62V56c0-10-12-15-12-29a24 24 0 0 1 48 0c0 14-12 19-12 29v15q0 3-3 3H31q-3 0-3-3V62h24M33 28l7 7 7-7M40 35v23M35 74q0 4 5 4t5-4"/></g></svg><p>OFF</p></div>
          <div class="widget w4"><div class="badge active">w000559<svg><use href="#anchor"/></svg></div><h3>STROM</h3>
            <svg class="art volt"><use href="#voltage"/></svg><p>125</p>
            <div class="frame"><i></i><i></i><i></i><i></i></div></div>
          <svg class="mark" viewBox="0 0 102 26"><path d="M98 13H6M13 3Q11 10 4 12q6 3 7 11" fill="none" stroke="#e2182f" stroke-width="5" stroke-linecap="round" stroke-linejoin="round"/></svg>
          <div class="limit"></div>
        </div>
      </div>
    </div>
    <div class="hbar"><i></i></div>
  </section>
  <div class="gutter"><i></i></div>

  <aside class="attributes">
    <div class="panel-head"><svg class="i24"><use href="#listalt"/></svg><h2>Attribute</h2>
      <button aria-label="Alle öffnen"><svg class="i20"><use href="#unfold"/></svg></button>
      <button aria-label="Alle schließen"><svg class="i20"><use href="#fold"/></svg></button>
      <button aria-label="Schließen"><svg class="i24"><use href="#close"/></svg></button>
    </div>
    <div class="attr-tabs"><button>SEITE</button><button class="on">WIDGET</button><button>CSS</button><button>SKRIPTE</button></div>
    <div class="selected">
      <svg class="pic-head"><use href="#bulbtile"/></svg>
      <div class="sel-id">w000559</div>
      <div class="sel-info"><b>Widget-Sammlung</b><em>Status (boolescher Wert, Zahl, Zeichenfolge)</em></div>
    </div>
    <div class="attr-wrap">
      <div class="attr-list">
        <div class="section"><div class="sec-head"><svg class="i20 raised"><use href="#filter"/></svg><span>Generell</span><input type="checkbox" aria-label="Generell"></div></div>
        <div class="section"><div class="sec-head"><span>Sichtbarkeit</span><input type="checkbox" aria-label="Sichtbarkeit"></div></div>
        <div class="section full">
          <div class="sec-head"><span>Allgemein</span><input type="checkbox" checked aria-label="Allgemein"><svg class="i20"><use href="#up"/></svg></div>
          <div class="row"><label for="a1">Kein Button</label><svg class="i16"><use href="#link"/></svg><div class="field"><input id="a1" type="checkbox" checked></div></div>
          <div class="row object"><label for="a2">Objekt-ID</label><svg class="i16"><use href="#link"/></svg><div class="field stacked">
            <div class="line big"><input id="a2" type="text" value="0_userdata.0.Strom"><button>...</button></div><em>Strom</em>
            <svg class="scribble" viewBox="0 0 136 14"><path d="M3 3q20-1 38 1 14 3 40 2 30-1 36 1 8 2 13 4" fill="none" stroke="#e2182f" stroke-width="4" stroke-linecap="round"/></svg></div></div>
          <div class="row"><label for="a3">Anzahl Werte</label><svg class="i16"><use href="#link"/></svg><div class="field"><input id="a3" class="line" type="text" value="0"></div></div>
          <div class="row"><label for="a4">Ohne Rand</label><svg class="i16"><use href="#link"/></svg><div class="field"><input id="a4" type="checkbox"></div></div>
          <div class="row slide"><label for="a5">Button Elevation</label><svg class="i16"><use href="#link"/></svg><div class="field"><input id="a5" type="range" max="24" value="4" style="--v:16.7%"><input class="num" type="text" value="4" aria-label="Wert"></div></div>
          <div class="row"><label for="a6">Outlined</label><svg class="i16"><use href="#link"/></svg><div class="field"><input id="a6" type="checkbox" checked></div></div>
          <div class="row"><label for="a7">Ecken</label><svg class="i16"><use href="#link"/></svg><div class="field"><input id="a7" type="checkbox" checked></div></div>
          <div class="row"><label for="a8">Nur Icon</label><svg class="i16"><use href="#link"/></svg><div class="field"><input id="a8" type="checkbox" checked></div></div>
          <div class="row"><label for="a9">Quadratischer Button</label><svg class="i16"><use href="#link"/></svg><div class="field"><input id="a9" type="checkbox"></div></div>
          <div class="row"><label for="a10">Elliptischer Button</label><svg class="i16"><use href="#link"/></svg><div class="field"><input id="a10" type="checkbox"></div></div>
          <div class="row"><label for="a11">Kreis Button</label><svg class="i16"><use href="#link"/></svg><div class="field"><input id="a11" type="checkbox"></div></div>
          <div class="row slide"><label for="a12">Button Padding</label><svg class="i16"><use href="#link"/></svg><div class="field"><input id="a12" type="range" max="24" value="0" style="--v:0%"><input class="num" type="text" value="0" aria-label="Wert"></div></div>
        </div>
        <div class="section full">
          <div class="sec-head"><span>Aktiv</span><input type="checkbox" checked aria-label="Aktiv"><svg class="i20"><use href="#up"/></svg></div>
          <div class="row icon-row"><label for="b1">Icon</label><svg class="i16"><use href="#link"/></svg><svg class="preview"><use href="#voltage"/></svg><div class="field"><div class="line big"><input id="b1" type="text" value="../vis-icontwo/Electricity/voltage"><button>...</button></div></div></div>
          <div class="row slide"><label for="b2">Icongröße</label><svg class="i16"><use href="#link"/></svg><div class="field"><input id="b2" type="range" max="200" value="100" style="--v:50%"><input class="num" type="text" value="100" aria-label="Wert"></div></div>
          <div class="row color"><label for="b3">Iconfarbe</label><svg class="i16"><use href="#link"/></svg><div class="field"><input id="b3" class="line big" type="text" value="rgba(255,255,255,1)"><button aria-label="Löschen"><svg class="i16"><use href="#trash"/></svg></button><button class="swatch" aria-label="Farbe"><i></i></button></div></div>
          <div class="row slide"><label for="b4">Icon Hover</label><svg class="i16"><use href="#link"/></svg><div class="field"><input id="b4" type="range" max="300" value="200" style="--v:66.7%"><input class="num" type="text" value="200" aria-label="Wert"></div></div>
          <div class="row color"><label for="b5">Textfarbe</label><svg class="i16"><use href="#link"/></svg><div class="field"><input id="b5" class="line big" type="text" value="rgba(255,255,255,1)"><button aria-label="Löschen"><svg class="i16"><use href="#trash"/></svg></button><button class="swatch" aria-label="Farbe"><i></i></button></div></div>
          <div class="row"><label for="b6">Headertext</label><svg class="i16"><use href="#link"/></svg><div class="field"><input id="b6" class="line" type="text" value="STROM"></div></div>
          <div class="row slide"><label for="b7">Headertextgröße</label><svg class="i16"><use href="#link"/></svg><div class="field"><input id="b7" type="range" max="500" value="130" style="--v:26%"><input class="num" type="text" value="130" aria-label="Wert"></div></div>
          <div class="row"><label for="b8">Wert</label><svg class="i16"><use href="#link"/></svg><div class="field"><input id="b8" class="line" type="text"></div></div>
          <div class="row slide"><label for="b9">Werttextgröße</label><svg class="i16"><use href="#link"/></svg><div class="field"><input id="b9" type="range" max="500" value="98" style="--v:19.6%"><input class="num" type="text" value="100" aria-label="Wert"></div></div>
          <div class="row color last"><label for="b10">Hintergrundfarbe</label><svg class="i16"><use href="#link"/></svg><div class="field"><input id="b10" class="line big" type="text"><button class="empty" aria-label="Farbe"></button></div></div>
        </div>
      </div>
      <div class="bar"><i style="height:46%"></i></div>
    </div>
  </aside>
</main>
</body>
</html>
```

FILE: styles.css
```css
* { box-sizing: border-box; }
body { margin: 0; height: 100vh; overflow: hidden; display: flex; flex-direction: column; background: #121212; color: #fff; font: 14px/20px Roboto, sans-serif; }
h1, h2, h3, p, ul { margin: 0; padding: 0; font-weight: 400; }
button { background: none; border: 0; padding: 0; margin: 0; color: inherit; font: inherit; display: flex; align-items: center; justify-content: center; }
input { font: inherit; color: inherit; background: none; border: 0; padding: 0; margin: 0; outline: 0; min-width: 0; }
svg { fill: currentColor; flex: none; display: block; }
.sprite { position: absolute; width: 0; height: 0; }
.i16 { width: 16px; height: 16px; }
.i18 { width: 18px; height: 18px; }
.i20 { width: 20px; height: 20px; }
.i22 { width: 22px; height: 22px; }
.i24 { width: 24px; height: 24px; }
.off { color: #757575; }

/* ribbon */
.ribbon { flex: none; height: 102px; padding: 10px 0; display: flex; background: #333; }
.group { display: flex; flex-direction: column; justify-content: space-between; padding: 0 10px; border-right: 1px solid #fff; }
.pages { padding: 0 15px; }
.projects { border: 0; }
.tools { display: flex; }
.tool { width: 60px; display: flex; flex-direction: column; justify-content: flex-start; gap: 3px; font-weight: 500; line-height: 15px; }
.tool small { margin-top: -1px; font-size: 10px; line-height: 10px; color: #ccc; }
.narrow { width: 50px; }
.stack { width: 28px; display: flex; flex-direction: column; }
.stack button, .icon-grid button { height: 28px; }
.loose button { height: 30px; }
.mid { width: 40px; }
.wide { width: 30px; }
.group-name { text-align: center; font-size: 12px; line-height: 14px; color: #ccc; }
.strong { font-weight: 700; padding-bottom: 3px; }
.sep { width: 1px; height: 63px; margin: 0 10px; background: #555; }
.icon-grid { display: grid; }
.two { grid-template-columns: 28px 28px; }
.six { grid-template-columns: repeat(6, 28px); }
.picker { position: relative; width: 261px; padding: 0 12px 0 10px; }
.picker-title { font-size: 12px; line-height: 15px; font-weight: 500; }
.picker-value { width: 100%; margin-top: 9px; height: 24px; gap: 6px; }
.picker-value span { flex: 1; text-align: left; font-weight: 500; }
.pic-bulb { width: 22px; height: 22px; }
.tooltip { position: absolute; top: 42px; right: 31px; padding: 0 5px; border-radius: 3px; background: rgba(222, 218, 222, .82); color: #4a3a70; font-size: 10px; line-height: 13px; white-space: nowrap; }
.account { margin-left: auto; padding-right: 7px; display: flex; flex-direction: column; align-items: flex-end; }
.account-icons { display: flex; align-items: center; height: 20px; gap: 15px; margin-right: -2px; }
.account-icons button { width: 22px; }
.user { display: flex; align-items: center; gap: 9px; margin-top: 11px; font-size: 16px; }
.version { margin-top: 2px; font: italic 10px/12px "Open Sans", sans-serif; color: #ddd; }

/* shared panels */
.work { flex: 1; min-height: 0; display: flex; }
.bar { width: 5px; flex: none; background: #ccc; }
.bar i { display: block; background: #5a5a5a; border-radius: 2px; }
.dark { background: #5e5e5e; }
.dark i { background: #323232; }
.gutter { width: 8px; flex: none; background: #000; display: flex; align-items: center; justify-content: center; }
.gutter i { width: 4px; height: 24px; border-radius: 2px; background: #43435a; }
.panel-head { display: flex; align-items: center; height: 34px; flex: none; background: #333; border-radius: 2px; padding: 0 5px 0 8px; }
.panel-head h2 { flex: 1; margin-left: 4px; font-size: 16px; font-weight: 500; }
.panel-head button { width: 24px; margin-left: 13px; }
.tall { height: 40px; }
.tall h2 { padding-bottom: 6px; }
.tall > svg { margin-bottom: 8px; }

/* palette */
.palette { width: 239px; flex: none; padding: 8px 8px 0; display: flex; flex-direction: column; }
.search { display: flex; align-items: center; height: 38px; flex: none; padding-top: 6px; gap: 8px; border-bottom: 1px solid #ccc; }
.search input { width: 100%; font-size: 16px; }
.search input::placeholder { color: #fff; opacity: 1; }
.sets-wrap { flex: 1; min-height: 0; display: flex; }
.sets { flex: 1; overflow: hidden; display: flex; flex-direction: column; gap: 10px; padding-top: 10px; }
.set { flex: none; width: 100%; height: 28px; padding: 0 4px 0 2px; background: #333; border-radius: 3px; font: 15px/21px "Open Sans", sans-serif; }
.set span { flex: 1; text-align: left; }
.pic { width: 20px; height: 20px; margin: 0 8px 2px 0; }
.double { height: 46px; }
.double span { text-align: center; }
.double .pic { align-self: flex-start; margin-top: 2px; }
.open-set { flex: none; height: 138px; margin-bottom: 1px; background: #333; border-radius: 3px; }
.open-set .set span { font-weight: 700; }
.set-version { margin: 8px 0 0 16px; font: italic 700 10px/14px "Open Sans", sans-serif; color: #bbb; }
.template { width: 188px; height: 65px; margin: 4px 0 0 20px; padding: 0 4px 0 8px; border: 1px solid #8a8a8a; border-radius: 8px; background: #442d72; font: 14px/21px "Open Sans", sans-serif; text-align: left; }
.template span { flex: 1; }
.pic-tile { width: 30px; height: 32px; }

/* editor */
.editor { flex: 1; min-width: 0; display: flex; flex-direction: column; padding-bottom: 6px; }
.tabs { height: 46px; flex: none; display: flex; align-items: center; padding-right: 7px; }
.run { width: 20px; margin-left: 8px; padding-top: 2px; color: #0a860a; }
.layers { margin-left: 11px; padding-top: 2px; }
.tab-strip { flex: 1; overflow: hidden; display: flex; gap: 30px; margin-left: 16px; }
.tab { flex: none; display: grid; grid-template-columns: 24px auto 18px; align-items: center; justify-items: center; height: 46px; padding-bottom: 6px; font-weight: 500; white-space: nowrap; }
.tab > svg { color: #aaa; margin-top: 6px; }
.tab span { margin: 0 8px 0 9px; }
.more { margin-left: 40px; padding-top: 4px; }
.stage { flex: 1; min-height: 0; display: flex; }
.menu { width: 270px; flex: none; background: #0b1c23; display: flex; flex-direction: column; color: #6b7173; }
.menu-head { height: 49px; flex: none; display: flex; align-items: center; justify-content: space-between; padding: 1px 16px 0; border-bottom: 1px solid #16282f; }
.menu-head h1, .view-head h1 { font-size: 20px; }
.menu-head button { color: #fff; }
.menu-body { flex: 1; min-height: 0; display: flex; }
.menu ul { flex: 1; overflow: hidden; padding-top: 8px; list-style: none; }
.menu a { display: grid; grid-template-columns: 24px 1fr; justify-items: start; align-items: center; gap: 32px; height: 48px; padding-left: 16px; font-size: 16px; font-weight: 500; color: #6b6f70; text-decoration: none; }
.menu a .i16 { justify-self: center; }
.dim { opacity: .45; }
.view { flex: 1; min-width: 0; display: flex; flex-direction: column; background: #021e2c; }
.view-head { height: 48px; flex: none; display: flex; align-items: center; gap: 13px; padding: 2px 0 0 21px; background: #104860; color: #67696c; }
.canvas { flex: 1; position: relative; }
.widget { position: absolute; width: 142px; height: 142px; border: 1px solid #203844; text-align: center; }
.w1 { left: 4px; top: 27px; }
.w2 { left: 159px; top: 26px; }
.w3 { left: 313px; top: 26px; }
.w4 { left: 468px; top: 26px; }
.badge { position: absolute; top: -19px; left: -5px; height: 13px; padding: 0 3px; display: flex; align-items: center; border-radius: 2px; background: #fff; color: #000; font: 11px/13px "Liberation Sans", sans-serif; }
.badge svg { width: 11px; height: 13px; color: #444; }
.active { background: #0d62bf; color: #fff; }
.active svg { color: #bcd; }
.widget h3 { margin-top: 2px; font-size: 21px; line-height: 28px; }
.widget p { position: absolute; left: 0; right: 0; bottom: 2px; font-size: 16px; }
.art { width: 80px; height: 80px; margin: 4px auto; }
.volt { width: 72px; height: 72px; margin-top: 8px; }
.frame { position: absolute; inset: -7px; border: 1px dashed #0d4a94; }
.frame i { position: absolute; width: 6px; height: 6px; background: #0a4486; }
.frame i:nth-child(1) { left: -1px; top: -1px; }
.frame i:nth-child(2) { right: -1px; top: -1px; }
.frame i:nth-child(3) { left: -1px; bottom: -1px; }
.frame i:nth-child(4) { right: -1px; bottom: -1px; }
.mark { position: absolute; left: 564px; top: 140px; width: 102px; height: 26px; }
.limit { position: absolute; left: 0; right: 0; top: 801px; border-top: 1px dashed #c5cdd0; }
.hbar { height: 5px; flex: none; background: #ccc; }
.hbar i { display: block; width: 76%; height: 5px; background: #5a5a5a; border-radius: 2px; }

/* attributes */
.attributes { width: 475px; flex: none; padding: 8px 8px 0; display: flex; flex-direction: column; }
.attr-tabs { display: flex; height: 47px; flex: none; }
.attr-tabs button { padding: 6px 17px 0; font-weight: 500; border-bottom: 2px solid transparent; }
.attr-tabs .on { color: #4dabf5; border-color: #4dabf5; }
.selected { display: flex; height: 40px; flex: none; padding-left: 1px; font-family: "Open Sans", sans-serif; }
.pic-head { width: 38px; height: 40px; }
.sel-id { margin-left: 5px; font-size: 15px; line-height: 24px; }
.sel-info { display: flex; flex-direction: column; gap: 2px; margin-left: 8px; font-size: 12px; line-height: 18px; font-style: italic; }
.sel-info b { height: 20px; padding: 1px 4px; background: #fff; color: #43307a; border-radius: 2px; }
.attr-wrap { flex: 1; min-height: 0; display: flex; }
.attr-list { flex: 1; overflow: hidden; padding-top: 10px; display: flex; flex-direction: column; gap: 10px; }
.section { flex: none; background: #333; border-radius: 3px; font: 12px/18px "Open Sans", sans-serif; }
.sec-head { height: 28px; display: flex; align-items: center; padding: 1px 28px 0 2px; font-size: 15px; }
.sec-head span { flex: 1; }
.full .sec-head { height: 30px; padding-right: 4px; gap: 4px; font-weight: 700; }
.raised { margin-bottom: 6px; }
input[type=checkbox] { appearance: none; flex: none; width: 12px; height: 12px; border: 1px solid #fff; border-radius: 1px; }
input[type=checkbox]:checked { border-color: #4dabf5; background: #4dabf5; }
input[type=checkbox]:checked::after { content: ""; display: block; width: 4px; height: 7px; margin: 0 auto; border: solid #234; border-width: 0 1px 1px 0; transform: rotate(40deg); }
.row { height: 25px; display: flex; align-items: center; padding: 0 3px; }
.row > label { flex: 1; }
.row > .i16 { margin: 0 4px 6px 0; color: #ddd; }
.field { width: 254px; flex: none; display: flex; align-items: center; font: 500 13px/18px Roboto, sans-serif; }
.field input[type=checkbox] { margin: 0 0 3px 2px; }
.field .line { display: flex; width: 100%; height: 18px; border-bottom: 1px solid #bbb; }
.field .big { height: 29px; }
.line input { flex: 1; }
.line button { width: 12px; margin-right: 26px; color: #4b86d8; }
.object { height: 51px; }
.stacked { position: relative; flex-direction: column; align-items: flex-start; padding-top: 2px; }
.stacked em { font: italic 12px/18px "Open Sans", sans-serif; }
.scribble { position: absolute; left: -3px; top: 25px; width: 136px; height: 14px; }
.slide { height: 32px; }
.slide .field { gap: 2px; }
input[type=range] { appearance: none; flex: 1; margin-left: -1px; height: 12px; }
input[type=range]::-webkit-slider-runnable-track { height: 12px; background: linear-gradient(90deg, #4dabf5 var(--v), #36607e var(--v)) 6px 5px / calc(100% - 12px) 2px no-repeat; }
input[type=range]::-webkit-slider-thumb { appearance: none; width: 12px; height: 12px; border-radius: 50%; background: #4dabf5; }
.num { width: 48px; height: 27px; padding-bottom: 8px; border-bottom: 1px solid #bbb; }
.icon-row { height: 36px; }
.icon-row label { padding-bottom: 8px; }
.icon-row > .i16 { margin: 0 2px 16px 0; }
.preview { width: 26px; height: 26px; margin-right: 6px; color: #111; }
.color { height: 47px; }
.color > .i16 { margin-bottom: 7px; }
.color .field { align-self: flex-end; padding-bottom: 3px; }
.color .line { flex: 1; margin-right: 5px; }
.swatch { width: 46px; height: 24px; margin: 0 8px 0 5px; background: #111; }
.swatch i { width: 36px; height: 14px; border-radius: 2px; background: #fff; }
.last { height: 49px; }
.empty { width: 48px; height: 26px; margin-left: 3px; border: 1px dashed #ccc; }
```
